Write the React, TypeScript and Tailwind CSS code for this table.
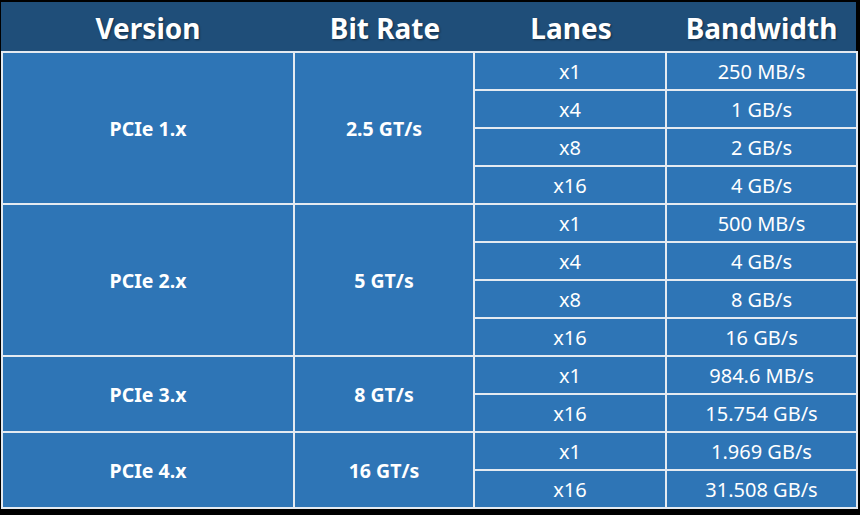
const groups = [
  {
    version: 'PCIe 1.x',
    rate: '2.5 GT/s',
    lanes: [
      ['x1', '250 MB/s'],
      ['x4', '1 GB/s'],
      ['x8', '2 GB/s'],
      ['x16', '4 GB/s'],
    ],
  },
  {
    version: 'PCIe 2.x',
    rate: '5 GT/s',
    lanes: [
      ['x1', '500 MB/s'],
      ['x4', '4 GB/s'],
      ['x8', '8 GB/s'],
      ['x16', '16 GB/s'],
    ],
  },
  {
    version: 'PCIe 3.x',
    rate: '8 GT/s',
    lanes: [
      ['x1', '984.6 MB/s'],
      ['x16', '15.754 GB/s'],
    ],
  },
  {
    version: 'PCIe 4.x',
    rate: '16 GT/s',
    lanes: [
      ['x1', '1.969 GB/s'],
      ['x16', '31.508 GB/s'],
    ],
  },
]

const headers = [
  { label: 'Version', w: 'w-[294px]' },
  { label: 'Bit Rate', w: 'w-[180px]' },
  { label: 'Lanes', w: 'w-[192px]' },
  { label: 'Bandwidth', w: 'w-[189px]' },
]

export default function App() {
  return (
    <div className="w-[860px] h-[515px] bg-black pt-[2px] pl-[1px] text-white font-['Noto_Sans',sans-serif] overflow-hidden">
      <div className="w-[855px] h-[49px] bg-[#1f4e79] flex">
        {headers.map((h) => (
          <div
            key={h.label}
            className={`${h.w} flex items-center justify-center pt-[2px] text-[28px] font-bold [text-shadow:1px_1px_2px_rgba(0,0,0,0.45)]`}
          >
            {h.label}
          </div>
        ))}
      </div>
      <div className="w-[857px] bg-[#e4eaf1] p-[2px] flex flex-col gap-[2px]">
        {groups.map((g) => (
          <div key={g.version} className="flex gap-[2px]">
            <div className="w-[290px] bg-[#2e75b6] flex items-center justify-center pt-[2px] text-[19.5px] font-bold">
              {g.version}
            </div>
            <div className="w-[178px] bg-[#2e75b6] flex items-center justify-center pt-[2px] text-[19.5px] font-bold">
              {g.rate}
            </div>
            <div className="flex flex-col gap-[2px]">
              {g.lanes.map(([lane, bw]) => (
                <div key={lane} className="flex gap-[2px] h-[36px] text-[20px]">
                  <div className="w-[190px] bg-[#2e75b6] flex items-center justify-center pt-[2px]">{lane}</div>
                  <div className="w-[189px] bg-[#2e75b6] flex items-center justify-center pt-[2px]">{bw}</div>
                </div>
              ))}
            </div>
          </div>
        ))}
      </div>
    </div>
  )
}
